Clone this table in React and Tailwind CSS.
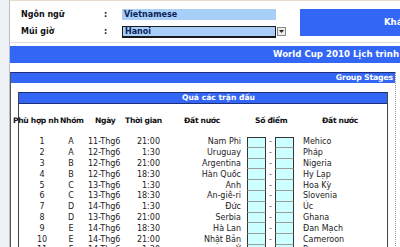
import React from "react";

const MATCHES = [
  { no: 1, group: "A", date: "11-Thg6", time: "21:00", home: "Nam Phi", away: "Mehico" },
  { no: 2, group: "A", date: "12-Thg6", time: "1:30", home: "Uruguay", away: "Pháp" },
  { no: 3, group: "B", date: "12-Thg6", time: "21:00", home: "Argentina", away: "Nigeria" },
  { no: 4, group: "B", date: "12-Thg6", time: "18:30", home: "Hàn Quốc", away: "Hy Lạp" },
  { no: 5, group: "C", date: "13-Thg6", time: "1:30", home: "Anh", away: "Hoa Kỳ" },
  { no: 6, group: "C", date: "13-Thg6", time: "18:30", home: "An-giê-ri", away: "Slovenia" },
  { no: 7, group: "D", date: "14-Thg6", time: "1:30", home: "Đức", away: "Úc" },
  { no: 8, group: "D", date: "13-Thg6", time: "21:00", home: "Serbia", away: "Ghana" },
  { no: 9, group: "E", date: "14-Thg6", time: "18:30", home: "Hà Lan", away: "Đan Mạch" },
  { no: 10, group: "E", date: "14-Thg6", time: "21:00", home: "Nhật Bản", away: "Cameroon" },
  { no: 11, group: "F", date: "14-Thg6", time: "1:30", home: "Ý", away: "Paraguay" },
];

const SettingRow = ({ label, children }) => (
  <div className="flex items-center h-[11px]">
    <span className="w-[83px] font-bold text-[8px] text-[#111]">{label}</span>
    <span className="w-[18px] text-[8px] font-bold text-[#111]">:</span>
    {children}
  </div>
);

const ScoreCell = ({ first }) => (
  <span
    className={`w-[19px] h-full bg-[#ccffff] border-x border-b border-x-[#333] border-b-[#9a9a9a] ${
      first ? "border-t border-t-[#333]" : ""
    }`}
  />
);

const MatchRow = ({ match, first }) => (
  <div className="flex items-center h-[10.8px] text-[8px] text-[#222] whitespace-nowrap">
    <span className="w-[41px] pl-[5px] text-center">{match.no}</span>
    <span className="w-[22px] text-center">{match.group}</span>
    <span className="w-[38px] pl-[6px]">{match.date}</span>
    <span className="w-[40px] text-right">{match.time}</span>
    <span className="w-[81px] text-right">{match.home}</span>
    <span className="w-[6px]" />
    <ScoreCell first={first} />
    <span className="w-[9px] text-center text-[#555]">-</span>
    <ScoreCell first={first} />
    <span className="pl-[9px]">{match.away}</span>
  </div>
);

export default function App() {
  return (
    <div className="flex w-[400px] h-[247px] overflow-hidden bg-white font-['DejaVu_Sans',sans-serif]">
      {/* sheet gutter */}
      <div className="w-[10px] shrink-0 bg-[#eef1f5] border-r border-[#b9bec6]" />

      <div className="flex-1 flex flex-col min-w-0">
        {/* settings */}
        <div className="h-[43px] shrink-0 flex border-b border-[#dcdcdc] border-t border-t-[#e8dcc8]">
          <div className="flex flex-col gap-[6px] pt-[8px] pl-[11px]">
            <SettingRow label="Ngôn ngữ">
              <div className="w-[154px] h-[11px] bg-[#a8cff7] pl-[2px] text-[8px] font-bold leading-[11px] text-[#0c1f5c]">
                Vietnamese
              </div>
            </SettingRow>
            <SettingRow label="Múi giờ">
              <div className="flex items-center">
                <div className="w-[154px] h-[12px] bg-[#a8cff7] border border-[#1a1a1a] border-b-2 pl-[2px] text-[8px] font-bold leading-[9px] text-[#0c1f5c]">
                  Hanoi
                </div>
                <div className="ml-[1px] w-[9px] h-[9px] bg-[#ececec] border border-[#888] flex items-center justify-center">
                  <svg width="5" height="3" viewBox="0 0 5 3">
                    <path d="M0 0h5L2.5 3z" fill="#222" />
                  </svg>
                </div>
              </div>
            </SettingRow>
          </div>
          <div className="ml-auto mt-[8px] w-[100px] h-[27px] bg-[#3366f5] flex items-center pl-[84px] text-white text-[8.5px] font-bold whitespace-nowrap overflow-hidden">
            Khám phá
          </div>
        </div>

        {/* title bar */}
        <div className="mt-[3px] h-[17px] shrink-0 bg-[#3366f5] flex items-center pl-[263px] text-white text-[8.6px] font-bold whitespace-nowrap overflow-hidden">
          World Cup 2010 Lịch trình
        </div>

        {/* group stages panel */}
        <div className="mt-[9px] flex-1 flex flex-col border-l border-[#555] mr-[4px] border-r border-r-[#9a9a9a] [border-right-style:dotted]">
          <div className="h-[11px] shrink-0 bg-[#3366f5] border-t border-[#1d2f7a] flex items-center justify-end pr-[2px] text-white text-[7.8px] tracking-[-0.2px] font-bold">
            Group Stages
          </div>

          <div className="mt-[9px] ml-[7px] mr-[7px] flex-1 flex flex-col border-l border-r border-[#444]">
            <div className="h-[12px] shrink-0 bg-[#3366f5] border-t border-b border-[#1d2f7a] flex items-center pl-[163px] text-white text-[7.6px] font-bold">
              Quá các trận đấu
            </div>

            <div className="mt-[10px] h-[14px] flex items-center -ml-[6px] text-[7.6px] tracking-[-0.3px] font-bold text-[#111] whitespace-nowrap">
              <span className="w-[47px]">Phù hợp nh</span>
              <span className="w-[35px]">Nhóm</span>
              <span className="w-[30px]">Ngày</span>
              <span className="w-[59px]">Thời gian</span>
              <span className="w-[71px]">Đất nước</span>
              <span className="w-[67px]">Số điểm</span>
              <span>Đất nước</span>
            </div>

            <div className="mt-[9px] flex flex-col">
              {MATCHES.map((match, i) => (
                <MatchRow key={match.no} match={match} first={i === 0} />
              ))}
            </div>
          </div>
        </div>
      </div>
    </div>
  );
}
